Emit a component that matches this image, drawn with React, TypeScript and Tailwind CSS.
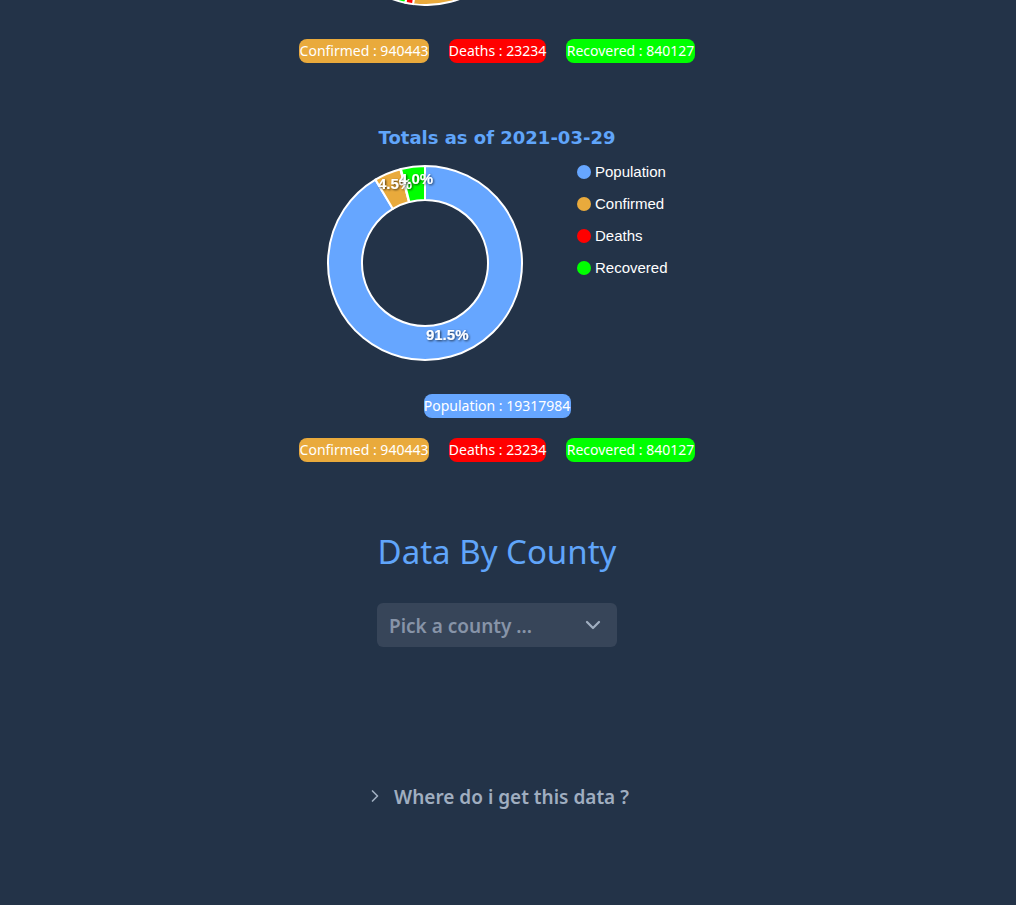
import { ChevronDown, ChevronRight } from "lucide-react";

const BLUE = "#66a6ff";
const ORANGE = "#e9aa3c";
const RED = "#ff0000";
const GREEN = "#00ff00";

const totals = {
  population: 19317984,
  confirmed: 940443,
  deaths: 23234,
  recovered: 840127,
};

type Slice = { label: string; value: number; color: string };

// annulus segment, angles in degrees clockwise from 12 o'clock
function arcPath(cx: number, cy: number, r0: number, r1: number, a0: number, a1: number) {
  const rad = (a: number) => ((a - 90) * Math.PI) / 180;
  const pt = (r: number, a: number) => [cx + r * Math.cos(rad(a)), cy + r * Math.sin(rad(a))];
  const large = a1 - a0 > 180 ? 1 : 0;
  const [x1, y1] = pt(r1, a0);
  const [x2, y2] = pt(r1, a1);
  const [x3, y3] = pt(r0, a1);
  const [x4, y4] = pt(r0, a0);
  return `M${x1} ${y1} A${r1} ${r1} 0 ${large} 1 ${x2} ${y2} L${x3} ${y3} A${r0} ${r0} 0 ${large} 0 ${x4} ${y4} Z`;
}

function Donut({ slices, cx, cy, viewBox, width, height, labels }: {
  slices: Slice[];
  cx: number;
  cy: number;
  viewBox: string;
  width: number;
  height: number;
  labels?: boolean;
}) {
  const total = slices.reduce((s, x) => s + x.value, 0);
  let start = 0;
  const parts = slices.map((s) => {
    const sweep = (s.value / total) * 360;
    const p = { ...s, a0: start, a1: start + sweep, pct: (s.value / total) * 100 };
    start += sweep;
    return p;
  });
  return (
    <svg width={width} height={height} viewBox={viewBox} className="block shrink-0">
      <defs>
        <filter id="lblshadow" x="-20%" y="-20%" width="140%" height="140%">
          <feDropShadow dx="1" dy="1" stdDeviation="1" floodColor="#000" floodOpacity="0.7" />
        </filter>
      </defs>
      {parts.map((p) => (
        <path key={p.label} d={arcPath(cx, cy, 63, 97, p.a0, p.a1)} fill={p.color} stroke="#fff" strokeWidth={2} strokeLinejoin="round" />
      ))}
      {labels &&
        parts
          .filter((p) => p.pct >= 1)
          .map((p) => {
            const mid = ((p.a0 + p.a1) / 2 - 90) * (Math.PI / 180);
            return (
              <text
                key={p.label + "-l"}
                x={cx + 80 * Math.cos(mid) + 1}
                y={cy + 80 * Math.sin(mid)}
                textAnchor="middle"
                fill="#fff"
                fontSize={15}
                fontWeight={700}
                fontFamily="'Liberation Sans', Arial, sans-serif"
                filter="url(#lblshadow)"
              >
                {p.pct.toFixed(1)}%
              </text>
            );
          })}
    </svg>
  );
}

function Badge({ text, color, w }: { text: string; color: string; w: string }) {
  return (
    <span
      className={`${w} h-6 rounded-lg flex items-center justify-center whitespace-nowrap text-[14px] text-white leading-none`}
      style={{ backgroundColor: color }}
    >
      {text}
    </span>
  );
}

function BadgeRow() {
  return (
    <div className="flex gap-5 font-['Noto_Sans','Open_Sans',sans-serif]">
      <Badge text={`Confirmed : ${totals.confirmed}`} color={ORANGE} w="w-[130px]" />
      <Badge text={`Deaths : ${totals.deaths}`} color={RED} w="w-[97px]" />
      <Badge text={`Recovered : ${totals.recovered}`} color={GREEN} w="w-[129px]" />
    </div>
  );
}

export default function App() {
  const all: Slice[] = [
    { label: "Population", value: totals.population, color: BLUE },
    { label: "Confirmed", value: totals.confirmed, color: ORANGE },
    { label: "Deaths", value: totals.deaths, color: RED },
    { label: "Recovered", value: totals.recovered, color: GREEN },
  ];
  const cases = all.slice(1);

  return (
    <div className="min-h-[905px] bg-[#233348] overflow-hidden">
      <div className="w-[994px] flex flex-col items-center">
        {/* bottom of the previous chart, scrolled off */}
        <div className="w-[342px]">
          <Donut slices={cases} cx={0} cy={0} viewBox="-100 92 200 6" width={200} height={6} />
        </div>

        <div className="mt-[33px]">
          <BadgeRow />
        </div>

        <h3 className="mt-[64px] h-[22px] leading-[22px] text-[18px] font-bold text-[#60a5fa] font-['DejaVu_Sans',Verdana,sans-serif]">
          Totals as of 2021-03-29
        </h3>

        <div className="mt-[14px] flex items-start gap-[52px] font-['Liberation_Sans',Arial,sans-serif]">
          <Donut slices={all} cx={100} cy={100} viewBox="0 0 200 200" width={200} height={200} labels />
          <ul className="flex flex-col gap-[14px] w-[92px]">
            {all.map((s) => (
              <li key={s.label} className="h-[18px] flex items-center gap-1 text-[15px] text-white">
                <span className="w-[14px] h-[14px] rounded-full shrink-0" style={{ backgroundColor: s.color }} />
                {s.label}
              </li>
            ))}
          </ul>
        </div>

        <div className="mt-[31px] font-['Noto_Sans','Open_Sans',sans-serif]">
          <Badge text={`Population : ${totals.population}`} color={BLUE} w="w-[147px]" />
        </div>

        <div className="mt-5">
          <BadgeRow />
        </div>

        <h2 className="mt-[68px] h-[44px] leading-[44px] text-[33px] text-[#60a5fa] font-['Noto_Sans','Open_Sans',sans-serif]">
          Data By County
        </h2>

        <button className="mt-[29px] w-[240px] h-[44px] rounded-md bg-[#374559] flex items-center justify-between pl-3 pr-3 text-[19px] font-semibold text-[#8794a8] font-['Noto_Sans','Open_Sans',sans-serif]">
          <span className="translate-y-[1px]">Pick a county ...</span>
          <ChevronDown className="w-6 h-6 text-[#a0aec0]" strokeWidth={2.25} />
        </button>

        <div className="mt-[136px] h-7 flex items-center gap-[9px] text-[19px] font-semibold text-[#a0aec0] font-['Noto_Sans','Open_Sans',sans-serif]">
          <ChevronRight className="w-5 h-5 -mt-[2px]" strokeWidth={2} />
          <span>Where do i get this data ?</span>
        </div>
      </div>
    </div>
  );
}
